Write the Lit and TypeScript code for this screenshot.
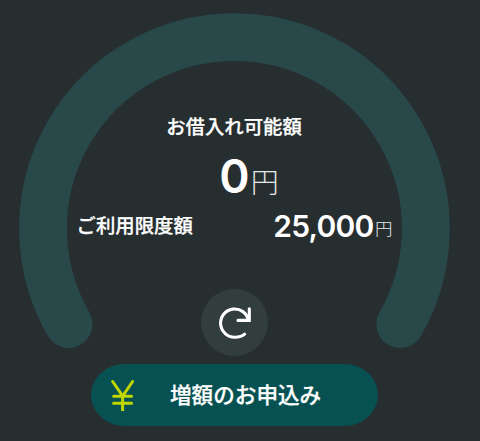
import { LitElement, html, css } from "lit";
import { customElement, property } from "lit/decorators.js";

@customElement("yen-amount")
class YenAmount extends LitElement {
  @property() value = "0";

  static styles = css`
    :host {
      display: inline-flex;
      align-items: baseline;
      white-space: nowrap;
    }
    .number {
      font-family: Inter, "Noto Sans CJK JP", sans-serif;
      font-weight: 600;
      letter-spacing: var(--number-spacing, 0);
    }
    .unit {
      font-family: "Noto Sans CJK JP", sans-serif;
      font-weight: 300;
      font-size: var(--unit-size);
      margin-left: var(--unit-gap);
      margin-bottom: var(--unit-lift, 0);
      transform: translateY(calc(-1 * var(--unit-lift, 0px)));
      color: #e4e8e8;
    }
  `;

  render() {
    return html`<span class="number">${this.value}</span><span class="unit">円</span>`;
  }
}

@customElement("app-root")
class AppRoot extends LitElement {
  static styles = css`
    :host {
      display: block;
      height: 441px;
      overflow: hidden;
      background: #262e30;
      color: #fff;
      font-family: "Noto Sans CJK JP", sans-serif;
    }
    .screen {
      position: relative;
      display: flex;
      flex-direction: column;
      align-items: center;
      width: 469px;
      height: 441px;
      box-sizing: border-box;
      padding-top: 114px;
    }
    .gauge {
      position: absolute;
      inset: 0;
    }
    .screen > :not(.gauge) {
      position: relative;
    }
    .title,
    .label {
      font-size: 19.4px;
      line-height: 24px;
      font-weight: 500;
      white-space: nowrap;
      -webkit-text-stroke: 0.25px #fff;
    }
    .title {
      margin-right: 1px;
    }
    .label {
      margin-bottom: 3px;
    }
    .available {
      --unit-size: 28px;
      --unit-gap: 1px;
      font-size: 46px;
      line-height: 60px;
      height: 60px;
      margin: 8px 0 0 29px;
    }
    .limit {
      display: flex;
      justify-content: space-between;
      align-items: center;
      width: 316px;
      height: 40px;
    }
    .limit-value {
      --unit-size: 17.5px;
      --unit-gap: 1.5px;
      --unit-lift: 2px;
      --number-spacing: -0.8px;
      font-size: 30px;
      line-height: 40px;
      height: 40px;
    }
    button {
      border: 0;
      padding: 0;
      color: inherit;
      font: inherit;
    }
    .refresh {
      display: grid;
      place-items: center;
      width: 67px;
      height: 67px;
      margin-top: 43px;
      border-radius: 50%;
      background: #323d3e;
    }
    .apply {
      display: flex;
      align-items: center;
      flex: none;
      width: 287px;
      height: 62px;
      margin-top: 8px;
      padding-left: 18px;
      border-radius: 34px / 31px;
      background: #075152;
      font-size: 21.6px;
      line-height: 30px;
      font-weight: 500;
      white-space: nowrap;
    }
    .apply-text {
      margin: 0 0 2px 33px;
      -webkit-text-stroke: 0.25px #fff;
    }
    svg {
      display: block;
    }
  `;

  render() {
    return html`
      <main class="screen">
        <svg class="gauge" width="469" height="441" fill="none">
          <path
            d="M68.6 324.1A191.4 191.4 0 1 1 400.2 324.1"
            stroke="#284849"
            stroke-width="47.8"
            stroke-linecap="round"
          />
        </svg>
        <div class="title">お借入れ可能額</div>
        <yen-amount class="available" value="0"></yen-amount>
        <div class="limit">
          <span class="label">ご利用限度額</span>
          <yen-amount class="limit-value" value="25,000"></yen-amount>
        </div>
        <button class="refresh" aria-label="更新">
          <svg width="67" height="67" fill="none" stroke="#fff" stroke-width="3.1" stroke-linecap="round">
            <path d="M43.6 45.2C41.2 47.3 38 48.2 34 48.2A14.1 14.1 0 1 1 47.5 31.4" />
            <path d="M48.3 19.7V31.4H37" stroke-linejoin="miter" />
          </svg>
        </button>
        <button class="apply">
          <svg width="28" height="34" fill="none" stroke="#bfd600" stroke-width="3" stroke-linecap="round">
            <path d="M3.6 3.5L13.7 18.2L23.6 3.5M4.6 18.2H22.6M4.6 25.2H22.6" />
            <path d="M13.6 18V33" stroke-linecap="butt" />
          </svg>
          <span class="apply-text">増額のお申込み</span>
        </button>
      </main>
    `;
  }
}
